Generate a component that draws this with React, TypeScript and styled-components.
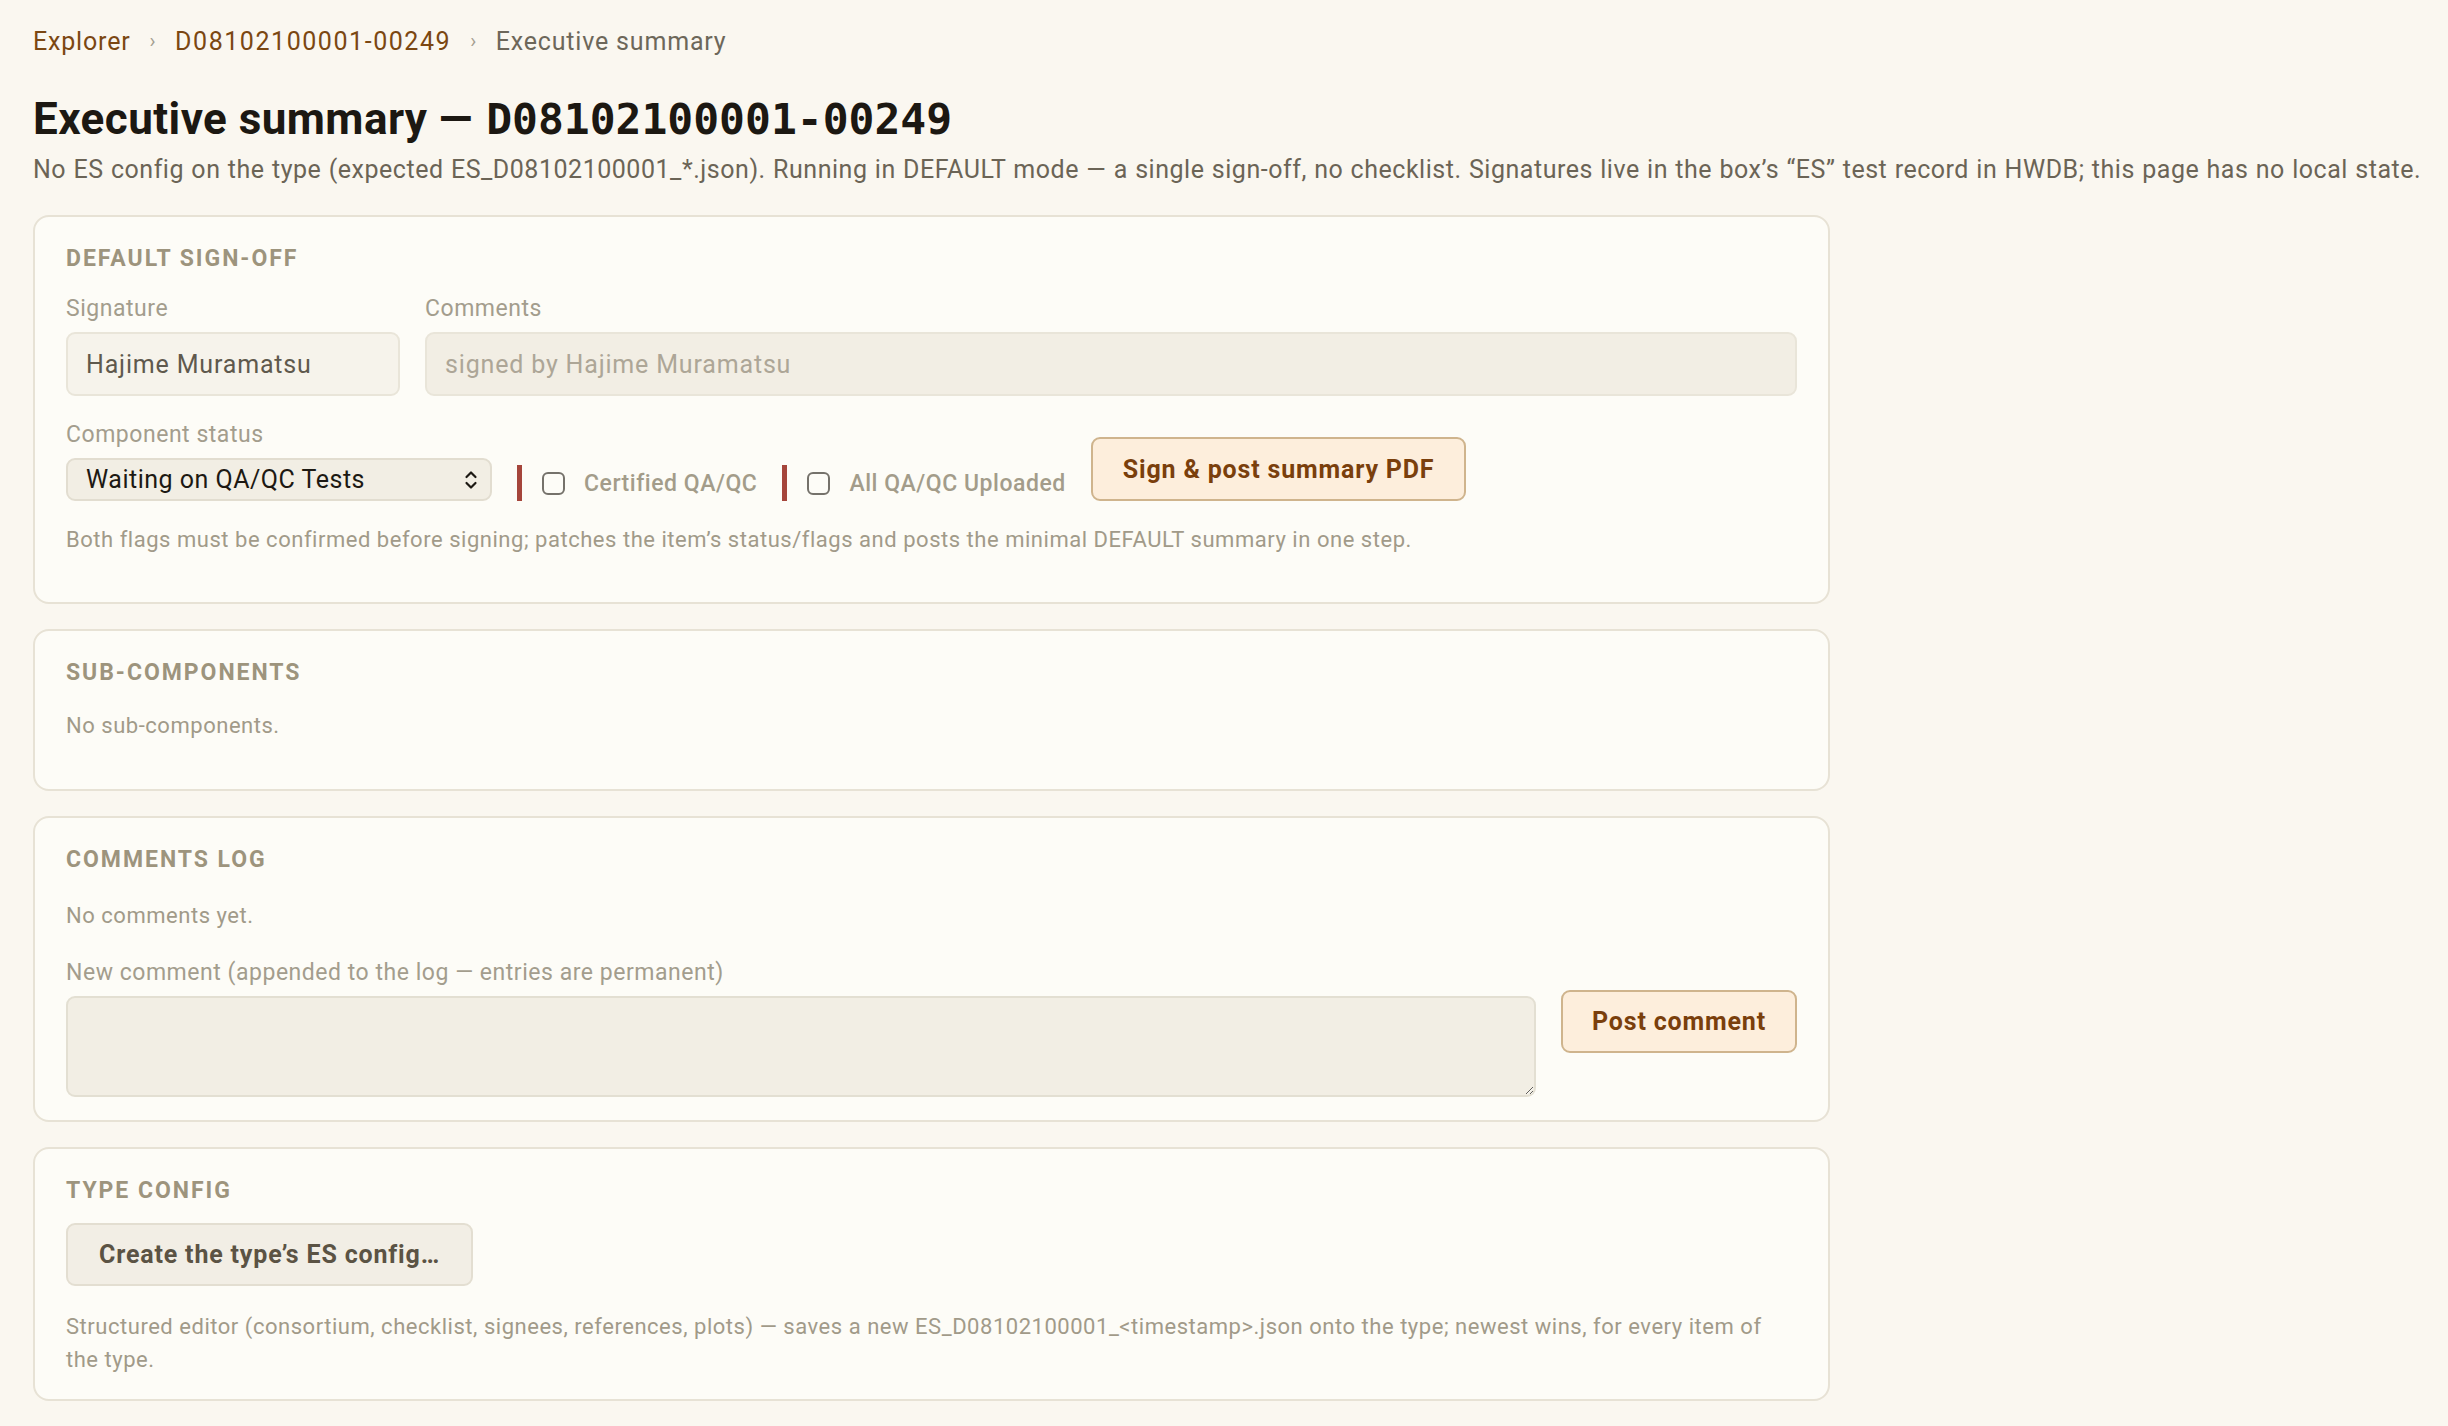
import styled, { createGlobalStyle } from 'styled-components';

const GlobalStyle = createGlobalStyle`
  html, body {
    margin: 0;
    background: #faf7f0;
  }
  body {
    font-family: Roboto, "Noto Sans", "Liberation Sans", sans-serif;
    letter-spacing: 0.033em;
    color: #2a251d;
  }
  * {
    box-sizing: border-box;
  }
`;

const Page = styled.main`
  padding: 24px 33px 28px;
`;

const Crumbs = styled.nav`
  display: flex;
  align-items: center;
  gap: 19px;
  font-size: 25px;
  line-height: 35px;
`;

const Crumb = styled.a<{ $current?: boolean; $code?: boolean }>`
  color: ${(p) => (p.$current ? '#6d675a' : '#7b4712')};
  letter-spacing: ${(p) => (p.$code ? '0.062em' : '0.033em')};
  text-decoration: none;
`;

const Sep = styled.span`
  color: #a59f90;
  font-size: 20px;
`;

const Title = styled.h1`
  margin: 34px 0 0;
  font-size: 44px;
  line-height: 53px;
  font-weight: 700;
  letter-spacing: 0.01em;
  color: #1c1812;
`;

const Mono = styled.code`
  font-family: "DejaVu Sans Mono", "Liberation Mono", monospace;
  font-weight: 700;
  font-size: 43px;
  letter-spacing: 0;
  margin-left: 2px;
`;

const Lede = styled.p`
  margin: 6px 0 0;
  font-size: 25px;
  line-height: 36px;
  word-spacing: 0.6px;
  color: #6b6456;
  white-space: nowrap;
`;

const Stack = styled.div`
  display: flex;
  flex-direction: column;
  gap: 25px;
  margin-top: 27px;
  width: 1797px;
`;

const Card = styled.section`
  background: #fdfcf7;
  border: 2px solid #e7e2d5;
  border-radius: 16px;
  padding: 27px 31px 23px;
`;

const Heading = styled.h2`
  margin: 0;
  font-size: 23px;
  line-height: 29px;
  font-weight: 700;
  letter-spacing: 0.085em;
  text-transform: uppercase;
  color: #9d947d;
`;

const Fields = styled.div`
  display: grid;
  grid-template-columns: 334px 1fr;
  gap: 25px;
  margin-top: 21px;
`;

const Field = styled.div<{ $width?: number }>`
  display: flex;
  flex-direction: column;
  gap: 8px;
  flex: ${(p) => (p.$width ? `0 0 ${p.$width}px` : '1 1 auto')};
`;

const Label = styled.label`
  font-size: 23px;
  line-height: 30px;
  color: #a39d8d;
`;

const TextInput = styled.input<{ $muted?: boolean }>`
  height: 64px;
  padding: 0 18px;
  font: inherit;
  font-size: 25px;
  letter-spacing: 0.033em;
  color: #5f594d;
  background: ${(p) => (p.$muted ? '#f2eee4' : '#f6f3eb')};
  border: 2px solid #e9e5d9;
  border-radius: 9px;
  outline: none;

  &::placeholder {
    color: #ada697;
  }
`;

const StatusRow = styled.div`
  display: flex;
  align-items: flex-end;
  gap: 25px;
  margin-top: 24px;
`;

const SelectWrap = styled.div`
  position: relative;
  width: 426px;

  svg {
    position: absolute;
    right: 14px;
    top: 50%;
    transform: translateY(-50%);
    pointer-events: none;
  }
`;

const Select = styled.select`
  appearance: none;
  width: 100%;
  height: 43px;
  padding: 0 40px 0 18px;
  font: inherit;
  font-size: 25px;
  letter-spacing: 0.02em;
  color: #1d1913;
  background: #f2eee4;
  border: 2px solid #e2ddd0;
  border-radius: 9px;
`;

const Flag = styled.label`
  display: flex;
  align-items: center;
  gap: 19px;
  height: 36px;
  border-left: 5px solid #a5453b;
  padding-left: 20px;
  font-size: 23px;
  font-weight: 500;
  color: #a39c8a;
`;

const Box = styled.input`
  appearance: none;
  width: 23px;
  height: 23px;
  margin: 0;
  border: 2px solid #75726b;
  border-radius: 6px;
  background: #fdfcf7;
`;

const Button = styled.button<{ $tone?: 'accent' | 'plain'; $height?: number }>`
  height: ${(p) => p.$height ?? 64}px;
  padding: 0 ${(p) => (p.$tone === 'plain' ? 31 : 30)}px;
  font: inherit;
  font-size: 25px;
  font-weight: 700;
  letter-spacing: 0.033em;
  white-space: nowrap;
  border-radius: 9px;
  border: 2px solid ${(p) => (p.$tone === 'plain' ? '#e3ded1' : '#cfb48d')};
  background: ${(p) => (p.$tone === 'plain' ? '#f2eee5' : '#fdeedc')};
  color: ${(p) => (p.$tone === 'plain' ? '#5b5344' : '#7a3f0c')};
  flex-shrink: 0;
`;

const PostButton = styled(Button)`
  width: 236px;
  padding: 0;
  margin-bottom: 12px;
`;

const Note = styled.p<{ $lh?: number; $top?: number; $tail?: number }>`
  margin: ${(p) => p.$top ?? 24}px 0 ${(p) => p.$tail ?? 24}px;
  font-size: 22px;
  line-height: ${(p) => p.$lh ?? 30}px;
  color: #a19a89;
`;

const CommentRow = styled.div`
  display: flex;
  align-items: center;
  gap: 25px;
  margin-top: 27px;
`;

const TextArea = styled.textarea`
  height: 101px;
  width: 100%;
  font: inherit;
  font-size: 25px;
  padding: 12px 18px;
  background: #f2eee4;
  border: 2px solid #e3dfd2;
  border-radius: 9px;
  resize: vertical;
`;

const Actions = styled.div`
  margin-top: 18px;
`;

function Chevrons() {
  return (
    <svg width="14" height="22" viewBox="0 0 14 22" fill="none" stroke="#1d1913" strokeWidth="2.2" strokeLinecap="round" strokeLinejoin="round">
      <path d="M2.5 8 L7 3.5 L11.5 8" />
      <path d="M2.5 14 L7 18.5 L11.5 14" />
    </svg>
  );
}

export default function App() {
  return (
    <>
      <GlobalStyle />
      <Page>
        <Crumbs>
          <Crumb href="#">Explorer</Crumb>
          <Sep>›</Sep>
          <Crumb href="#" $code>
            D08102100001-00249
          </Crumb>
          <Sep>›</Sep>
          <Crumb $current>Executive summary</Crumb>
        </Crumbs>

        <Title>
          Executive summary — <Mono>D08102100001-00249</Mono>
        </Title>
        <Lede>
          No ES config on the type (expected ES_D08102100001_*.json). Running in DEFAULT mode — a single sign-off, no
          checklist. Signatures live in the box’s “ES” test record in HWDB; this page has no local state.
        </Lede>

        <Stack>
          <Card>
            <Heading>Default sign-off</Heading>
            <Fields>
              <Field>
                <Label>Signature</Label>
                <TextInput defaultValue="Hajime Muramatsu" readOnly />
              </Field>
              <Field>
                <Label>Comments</Label>
                <TextInput $muted placeholder="signed by Hajime Muramatsu" />
              </Field>
            </Fields>

            <StatusRow>
              <Field $width={426}>
                <Label>Component status</Label>
                <SelectWrap>
                  <Select defaultValue="waiting">
                    <option value="waiting">Waiting on QA/QC Tests</option>
                    <option value="ready">Ready for Sign-off</option>
                  </Select>
                  <Chevrons />
                </SelectWrap>
              </Field>
              <Flag>
                <Box type="checkbox" />
                Certified QA/QC
              </Flag>
              <Flag>
                <Box type="checkbox" />
                All QA/QC Uploaded
              </Flag>
              <Button>Sign &amp; post summary PDF</Button>
            </StatusRow>

            <Note>
              Both flags must be confirmed before signing; patches the item’s status/flags and posts the minimal DEFAULT
              summary in one step.
            </Note>
          </Card>

          <Card>
            <Heading>Sub-components</Heading>
            <Note $tail={25}>No sub-components.</Note>
          </Card>

          <Card>
            <Heading>Comments log</Heading>
            <Note $top={27} $tail={0}>
              No comments yet.
            </Note>
            <CommentRow>
              <Field>
                <Label>New comment (appended to the log — entries are permanent)</Label>
                <TextArea />
              </Field>
              <PostButton $height={63}>Post comment</PostButton>
            </CommentRow>
          </Card>

          <Card>
            <Heading>Type config</Heading>
            <Actions>
              <Button $tone="plain" $height={63}>
                Create the type’s ES config…
              </Button>
            </Actions>
            <Note $lh={33} $top={24} $tail={0}>
              Structured editor (consortium, checklist, signees, references, plots) — saves a new
              ES_D08102100001_&lt;timestamp&gt;.json onto the type; newest wins, for every item of the type.
            </Note>
          </Card>
        </Stack>
      </Page>
    </>
  );
}
